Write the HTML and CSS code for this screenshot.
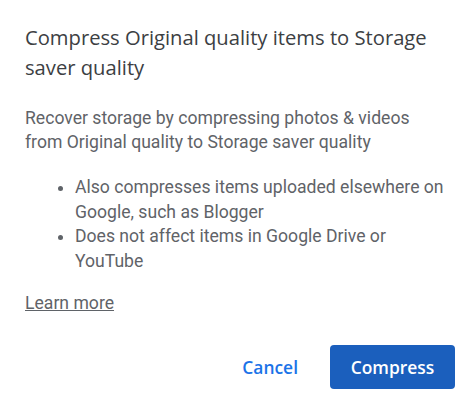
FILE: index.html
```html
<!DOCTYPE html>
<html>
<head>
<meta charset="utf-8">
<link rel="stylesheet" href="styles.css">
</head>
<body>
<div class="dialog">
  <h1 class="title">Compress Original quality items to Storage saver quality</h1>
  <p class="desc">Recover storage by compressing photos &amp; videos from Original quality to Storage saver quality</p>
  <ul class="points">
    <li>Also compresses items uploaded elsewhere on Google, such as Blogger</li>
    <li>Does not affect items in Google Drive or YouTube</li>
  </ul>
  <a class="learn" href="#">Learn more</a>
  <div class="actions">
    <button class="btn btn-text">Cancel</button>
    <button class="btn btn-filled">Compress</button>
  </div>
</div>
</body>
</html>
```
FILE: styles.css
```css
html, body {
  margin: 0;
  padding: 0;
  background: #ffffff;
}
.dialog {
  width: 469px;
  box-sizing: border-box;
  padding: 22px 14px 0 25px;
  font-family: Roboto, "Liberation Sans", sans-serif;
}
.title {
  margin: 0;
  font-family: "Open Sans", sans-serif;
  font-weight: 400;
  font-size: 20.2px;
  line-height: 30px;
  color: #3c4043;
  padding-right: 16px;
}
.desc {
  margin: 24px 0 0;
  font-size: 17.6px;
  line-height: 24px;
  color: #5f6368;
  padding-right: 20px;
}
.points {
  margin: 21px 0 0;
  padding-left: 50px;
  font-size: 17.6px;
  line-height: 24.5px;
  color: #5f6368;
  padding-right: 10px;
}
.learn {
  display: inline-block;
  margin-top: 18px;
  font-size: 17.6px;
  line-height: 24px;
  color: #5f6368;
  text-decoration: underline;
}
.actions {
  display: flex;
  justify-content: flex-end;
  align-items: center;
  gap: 16px;
  margin-top: 30px;
}
.btn {
  font-family: "Open Sans", sans-serif;
  font-size: 17.4px;
  font-weight: 600;
  border: none;
  border-radius: 4px;
  height: 44px;
  padding: 0 20px;
  cursor: pointer;
}
.btn-text {
  background: transparent;
  color: #1a73e8;
  padding: 0 16px;
}
.btn-filled {
  background: #1b5fbd;
  color: #ffffff;
  width: 125px;
}
```
